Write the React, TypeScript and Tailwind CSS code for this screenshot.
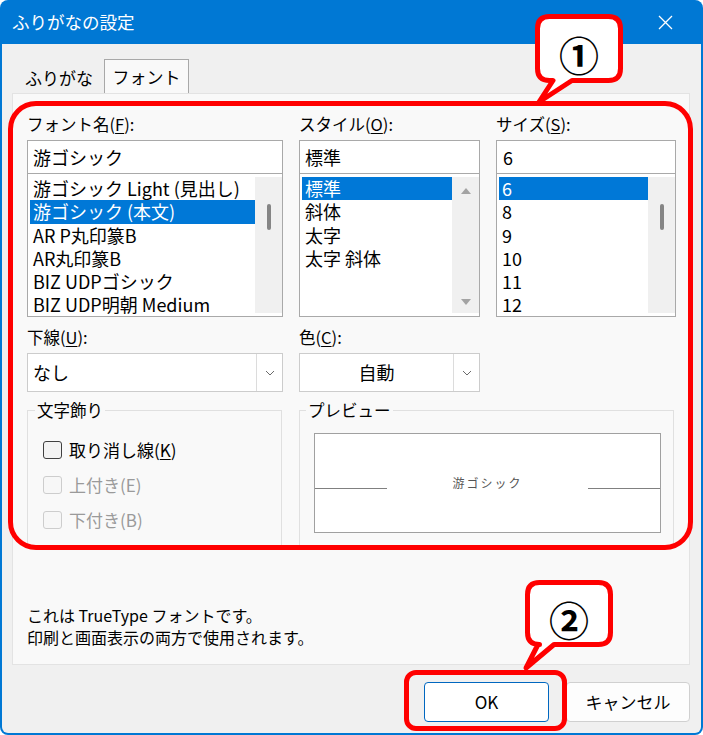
import React from 'react';

const fontItems = [
  '游ゴシック Light (見出し)',
  '游ゴシック (本文)',
  'AR P丸印篆B',
  'AR丸印篆B',
  'BIZ UDPゴシック',
  'BIZ UDP明朝 Medium',
];
const styleItems = ['標準', '斜体', '太字', '太字 斜体'];
const sizeItems = ['6', '8', '9', '10', '11', '12'];

function Scrollbar({ arrows }: { arrows?: boolean }) {
  return (
    <div className="w-[27px] shrink-0 bg-[#f0f0f0] flex flex-col items-center">
      {arrows ? (
        <>
          <svg className="mt-[11px]" width="10" height="6" viewBox="0 0 10 6">
            <path d="M0 6 L5 0 L10 6 Z" fill="#a3a3a3" />
          </svg>
          <div className="flex-1" />
          <svg className="mb-[8px]" width="10" height="6" viewBox="0 0 10 6">
            <path d="M0 0 L10 0 L5 6 Z" fill="#a3a3a3" />
          </svg>
        </>
      ) : (
        <div className="mt-[27px] w-[4px] h-[26px] rounded-full bg-[#858585]" />
      )}
    </div>
  );
}

function ListBox({ items, selected, arrows }: { items: string[]; selected: number; arrows?: boolean }) {
  return (
    <div className="h-[143px] border border-t-0 border-[#a9a9a9] bg-white pl-[2px] py-[3px] flex">
      <div className="flex-1 flex flex-col">
        {items.map((it, i) => (
          <div
            key={it}
            className={
              i === selected
                ? 'h-[23.3px] shrink-0 px-[3px] leading-[23.3px] text-[18px] whitespace-nowrap bg-[#0078d7] text-white'
                : 'h-[23.3px] shrink-0 px-[3px] leading-[23.3px] text-[18px] whitespace-nowrap text-black'
            }
          >
            {it}
          </div>
        ))}
      </div>
      <Scrollbar arrows={arrows} />
    </div>
  );
}

function Combo({ value, center }: { value: string; center?: boolean }) {
  return (
    <div className="h-[39px] border border-[#cccccc] bg-white flex">
      <div className={center ? 'flex-1 px-[5px] leading-[37px] text-[18px] text-center' : 'flex-1 px-[5px] leading-[37px] text-[18px]'}>
        {value}
      </div>
      <div className="w-[26px] border-l border-[#dcdcdc] flex items-center justify-center">
        <svg width="10" height="6" viewBox="0 0 10 6">
          <path d="M1 1 L5 5 L9 1" fill="none" stroke="#6b6b6b" strokeWidth="1" />
        </svg>
      </div>
    </div>
  );
}

function Check({ label, disabled }: { label: React.ReactNode; disabled?: boolean }) {
  return (
    <div className="h-[35px] flex items-center gap-[7px]">
      <div
        className={
          disabled
            ? 'w-[19px] h-[18px] rounded-[3px] border border-[#cdcdcd] bg-[#f7f7f7]'
            : 'w-[19px] h-[18px] rounded-[3px] border border-[#404040] bg-[#f3f3f3]'
        }
      />
      <span className={disabled ? 'text-[17px] text-[#9a9a9a]' : 'text-[17px] text-black'}>{label}</span>
    </div>
  );
}

export default function App() {
  return (
    <div className="relative w-[703px] h-[735px] bg-white font-['Noto_Sans_CJK_JP',sans-serif] text-black select-none">
      <div className="w-full h-full rounded-[8px] overflow-hidden bg-[#0078d4] flex flex-col">
        {/* title bar */}
        <div className="h-[44px] shrink-0 flex items-center justify-between pl-[12px] pr-[30px]">
          <span className="text-[17.5px] text-white leading-none">ふりがなの設定</span>
          <svg width="15" height="15" viewBox="0 0 15 15">
            <path d="M1 1 L14 14 M14 1 L1 14" stroke="#ffffff" strokeWidth="1.3" />
          </svg>
        </div>

        <div className="flex-1 mx-[2px] mb-[2px] bg-[#f0f0f0] rounded-b-[6px] flex flex-col">
          {/* tabs */}
          <div className="mt-[15px] h-[34px] pl-[12px] flex items-end">
            <div className="w-[90px] h-[31px] flex items-center justify-center text-[17px]">ふりがな</div>
            <div className="w-[85px] h-[34px] border border-b-0 border-[#a8a8a8] bg-[#f9f9f9] flex items-center justify-center text-[17px]">
              フォント
            </div>
          </div>

          {/* panel */}
          <div className="ml-[10px] mr-[11px] h-[572px] bg-[#f9f9f9] border border-[#e3e3e3] pl-[14px] pt-[19px]">
            <div className="flex gap-[16px]">
              <div className="w-[256px] flex flex-col">
                <div className="h-[22px] leading-[22px] text-[16.5px]">
                  フォント名(<u className="underline-offset-2">F</u>):
                </div>
                <div className="mt-[5px] h-[34px] border border-[#a9a9a9] bg-white px-[5px] leading-[32px] text-[18px]">游ゴシック</div>
                <ListBox items={fontItems} selected={1} />
              </div>
              <div className="w-[181px] flex flex-col">
                <div className="h-[22px] leading-[22px] text-[16.5px]">
                  スタイル(<u className="underline-offset-2">O</u>):
                </div>
                <div className="mt-[5px] h-[34px] border border-[#a9a9a9] bg-white px-[5px] leading-[32px] text-[18px]">標準</div>
                <ListBox items={styleItems} selected={0} arrows />
              </div>
              <div className="w-[180px] flex flex-col">
                <div className="h-[22px] leading-[22px] text-[16.5px]">
                  サイズ(<u className="underline-offset-2">S</u>):
                </div>
                <div className="mt-[5px] h-[34px] border border-[#a9a9a9] bg-white px-[6px] leading-[32px] text-[18px]">6</div>
                <ListBox items={sizeItems} selected={0} />
              </div>
            </div>

            <div className="mt-[9px] flex gap-[16px]">
              <div className="w-[256px] flex flex-col">
                <div className="h-[22px] leading-[22px] text-[16.5px]">
                  下線(<u className="underline-offset-2">U</u>):
                </div>
                <div className="mt-[5px]">
                  <Combo value="なし" />
                </div>
              </div>
              <div className="w-[181px] flex flex-col">
                <div className="h-[22px] leading-[22px] text-[16.5px]">
                  色(<u className="underline-offset-2">C</u>):
                </div>
                <div className="mt-[5px]">
                  <Combo value="自動" center />
                </div>
              </div>
            </div>

            <div className="mt-[7px] flex gap-[17px]">
              <fieldset className="w-[255px] h-[148px] border border-[#e0e0e0] pl-[15px]">
                <legend className="-ml-[8px] px-[2px] h-[22px] leading-[22px] text-[16.5px]">文字飾り</legend>
                <div className="pt-[11px] flex flex-col">
                  <Check label={<>取り消し線(<u className="underline-offset-2">K</u>)</>} />
                  <Check label="上付き(E)" disabled />
                  <Check label="下付き(B)" disabled />
                </div>
              </fieldset>
              <fieldset className="w-[375px] h-[148px] border border-[#e0e0e0] pl-[14px]">
                <legend className="-ml-[8px] px-[2px] h-[22px] leading-[22px] text-[16.5px]">プレビュー</legend>
                <div className="mt-[12px] w-[347px] h-[100px] border border-[#a0a0a0] bg-white">
                  <div className="mt-[42px] flex items-end">
                    <div className="w-[72px] h-[1px] bg-[#808080]" />
                    <span className="flex-1 text-center text-[12px] leading-[13px] tracking-[2px] text-[#555555]">游ゴシック</span>
                    <div className="w-[72px] h-[1px] bg-[#808080]" />
                  </div>
                </div>
              </fieldset>
            </div>

            <div className="mt-[57px] text-[16px] leading-[22px]">
              <div>これは TrueType フォントです。</div>
              <div>印刷と画面表示の両方で使用されます。</div>
            </div>
          </div>

          {/* buttons */}
          <div className="mt-[17px] pr-[11px] flex justify-end gap-[17px]">
            <button className="w-[125px] h-[40px] rounded-[4px] border border-[#0067c0] bg-white text-[17px]">OK</button>
            <button className="w-[124px] h-[40px] rounded-[4px] border border-[#d0d0d0] bg-[#fdfdfd] text-[17px]">キャンセル</button>
          </div>
        </div>
      </div>

      {/* annotations */}
      <div className="absolute left-[8px] top-[101px] w-[685px] h-[449px] border-[5px] border-[#ff0000] rounded-[28px] pointer-events-none" />
      <div className="absolute left-[404px] top-[670px] w-[163px] h-[61px] border-[5px] border-[#ff0000] rounded-[12px] pointer-events-none" />
      <svg className="absolute left-0 top-0 pointer-events-none" width="703" height="735" viewBox="0 0 703 735">
        <path
          d="M549.5 16.5 H608.5 Q620.5 16.5 620.5 28.5 V68.5 Q620.5 80.5 608.5 80.5 H572 L539 102 L553 80.5 H549.5 Q537.5 80.5 537.5 68.5 V28.5 Q537.5 16.5 549.5 16.5 Z"
          fill="#ffffff"
          stroke="#ff0000"
          strokeWidth="5"
          strokeLinejoin="round"
        />
        <path
          d="M539.5 582.5 H598.5 Q610.5 582.5 610.5 594.5 V632.5 Q610.5 644.5 598.5 644.5 H554 L526 668 L538 644.5 H539.5 Q527.5 644.5 527.5 632.5 V594.5 Q527.5 582.5 539.5 582.5 Z"
          fill="#ffffff"
          stroke="#ff0000"
          strokeWidth="5"
          strokeLinejoin="round"
        />
      </svg>
      <div className="absolute left-[537px] top-[16px] w-[84px] h-[65px] pt-[10px] flex items-center justify-center text-[40px] font-bold leading-none">
        ①
      </div>
      <div className="absolute left-[527px] top-[582px] w-[84px] h-[63px] pt-[10px] flex items-center justify-center text-[40px] font-bold leading-none">
        ②
      </div>
    </div>
  );
}
